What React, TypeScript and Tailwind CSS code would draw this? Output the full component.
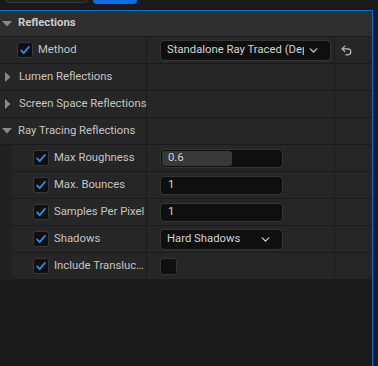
import { ChevronDown, Undo2 } from 'lucide-react';

const font = { fontFamily: 'Roboto, "Noto Sans", sans-serif' };

function Check() {
  return (
    <span className="flex h-4 w-4 shrink-0 items-center justify-center rounded-[3px] border border-[#383838] bg-[#0f0f0f]">
      <svg viewBox="0 0 16 16" className="h-3.5 w-3.5">
        <path d="M3.5 8.5 6.5 11.5 12.5 4.5" fill="none" stroke="#2a8cf0" strokeWidth="2" strokeLinecap="round" strokeLinejoin="round" />
      </svg>
    </span>
  );
}

function Arrow({ open }: { open?: boolean }) {
  return (
    <svg viewBox="0 0 10 10" className="h-[10px] w-[10px] shrink-0">
      {open ? <polygon points="0,2 10,2 5,7.5" fill="#8a8a8a" /> : <polygon points="2,0 7.5,5 2,10" fill="#8a8a8a" />}
    </svg>
  );
}

function Row({ name, value, reset, nested }: { name: React.ReactNode; value?: React.ReactNode; reset?: React.ReactNode; nested?: boolean }) {
  return (
    <div className="flex h-[27px] border-b border-[#1b1b1b] bg-[#262626]">
      <div className={`flex items-center border-r border-[#1b1b1b] ${nested ? 'w-[135px] pl-[21px]' : 'w-[147px]'}`}>{name}</div>
      <div className="flex w-[188px] items-center border-r border-[#1b1b1b] pl-[13px]">{value}</div>
      <div className="flex flex-1 items-center pl-[5px]">{reset}</div>
    </div>
  );
}

function Field({ text, fill }: { text: string; fill?: boolean }) {
  return (
    <div className="relative flex h-[19px] w-[123px] items-center rounded-[4px] border border-[#353535] bg-[#0f0f0f] px-[7px] text-[11.3px] text-[#d2d2d2]">
      {fill && <div className="absolute inset-y-px left-px w-[70px] rounded-[3px] bg-[#383838]" />}
      <span className="relative">{text}</span>
    </div>
  );
}

export default function App() {
  const label = 'text-[11.3px] text-[#c4c4c4] whitespace-nowrap';
  return (
    <div className="flex h-[366px] w-[378px] flex-col overflow-hidden bg-[#1b1b1b]" style={font}>
      <div className="relative h-[10px] shrink-0 bg-[#1a1a1a]">
        <div className="absolute left-[5px] top-[-12px] h-[15px] w-[83px] rounded-[4px] border border-[#3a3a3a] bg-[#222]" />
        <div className="absolute left-[93px] top-[-12px] h-[16px] w-[44px] rounded-[4px] bg-[#0a6fe0]" />
      </div>
      <div className="flex min-h-0 flex-1">
        <div className="flex w-[373px] flex-col border-r border-t border-[#0a6ddb]">
          <div className="flex h-[26px] items-center gap-[6px] border-b border-[#1b1b1b] bg-[#2f2f2f] pl-[2px]">
            <Arrow open />
            <span className="text-[11.3px] font-bold text-[#cccccc]">Reflections</span>
          </div>
          <Row
            name={
              <div className="flex items-center gap-[5px] pl-[17px]">
                <Check />
                <span className={label}>Method</span>
              </div>
            }
            value={
              <div className="flex h-[21px] w-[171px] items-center justify-between rounded-[4px] border border-[#353535] bg-[#0f0f0f] pl-[6px] pr-[10px]">
                <span className="w-[137px] overflow-hidden whitespace-nowrap text-[11.3px] text-[#d2d2d2]">Standalone Ray Traced (Deprecated)</span>
                <ChevronDown className="h-[13px] w-[13px] text-[#d0d0d0]" strokeWidth={2.2} />
              </div>
            }
            reset={<Undo2 className="h-[13px] w-[13px] text-[#bdbdbd]" strokeWidth={2.2} />}
          />
          {['Lumen Reflections', 'Screen Space Reflections'].map((t) => (
            <Row
              key={t}
              name={
                <div className="flex items-center gap-[6px] pl-[3px]">
                  <Arrow />
                  <span className={label}>{t}</span>
                </div>
              }
            />
          ))}
          <Row
            name={
              <div className="flex items-center gap-[6px] pl-[2px]">
                <Arrow open />
                <span className={label}>Ray Tracing Reflections</span>
              </div>
            }
          />
          <div className="flex">
            <div className="w-[12px] bg-[#212121]" />
            <div className="flex flex-1 flex-col">
              {[
                ['Max Roughness', <Field text="0.6" fill />],
                ['Max. Bounces', <Field text="1" />],
                ['Samples Per Pixel', <Field text="1" />],
                [
                  'Shadows',
                  <div className="flex h-[21px] w-[123px] items-center justify-between rounded-[4px] border border-[#353535] bg-[#0f0f0f] pl-[6px] pr-[10px]">
                    <span className="text-[11.3px] text-[#d2d2d2]">Hard Shadows</span>
                    <ChevronDown className="h-[13px] w-[13px] text-[#d0d0d0]" strokeWidth={2.2} />
                  </div>,
                ],
                ['Include Transluc…', <span className="h-[17px] w-[17px] rounded-[3px] border border-[#353535] bg-[#0f0f0f]" />],
              ].map(([n, v], i) => (
                <Row
                  key={i}
                  nested
                  name={
                    <div className="flex items-center gap-[5px]">
                      <Check />
                      <span className={label}>{n}</span>
                    </div>
                  }
                  value={v}
                />
              ))}
            </div>
          </div>
          <div className="flex-1 bg-[#1b1b1b]" />
        </div>
        <div className="flex-1 bg-[#1c1c1c]" />
      </div>
    </div>
  );
}
